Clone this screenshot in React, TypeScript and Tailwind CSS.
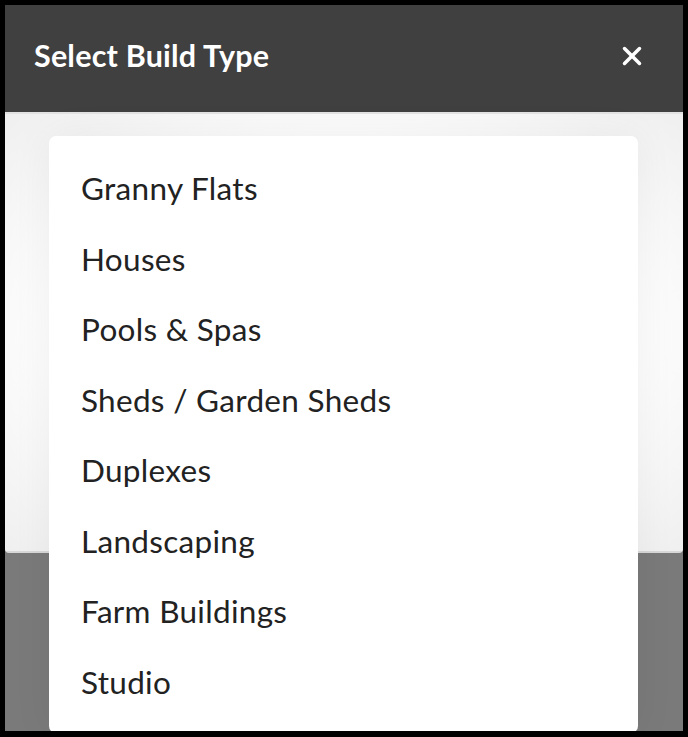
import { X } from "lucide-react";

const buildTypes = [
  "Granny Flats",
  "Houses",
  "Pools & Spas",
  "Sheds / Garden Sheds",
  "Duplexes",
  "Landscaping",
  "Farm Buildings",
  "Studio",
];

export default function App() {
  return (
    <div className="w-[688px] h-[737px] bg-black pt-[5px] pl-[5px] pr-[5px] pb-[6px] font-['Lato',sans-serif]">
      <div className="relative h-full bg-[#7a7a7a] overflow-hidden">
        <div className="flex flex-col rounded-b-[4px] overflow-hidden">
          <div className="h-[107px] bg-[#404040] flex items-center justify-between pl-[29px] pr-[36px] pb-[5px]">
            <h2 className="text-white text-[30.5px] font-bold tracking-[0.2px]">Select Build Type</h2>
            <X className="w-[30px] h-[30px] text-white" strokeWidth={2.8} />
          </div>
          <div className="h-[2px] bg-[#e2e2e2]" />
          <div className="h-[439px] bg-[radial-gradient(ellipse_at_center,#ffffff_55%,#efefef_100%)] border-b-2 border-[#d8d8d8]" />
        </div>

        <ul className="absolute left-[44px] top-[131px] w-[589px] h-[597px] bg-white rounded-[7px] shadow-[0_0_40px_rgba(0,0,0,0.06)] pt-[17.5px]">
          {buildTypes.map((type) => (
            <li
              key={type}
              className="h-[70.5px] flex items-center pl-[32px] text-[31.5px] text-[#222222] tracking-[0.3px]"
            >
              {type}
            </li>
          ))}
        </ul>
      </div>
    </div>
  );
}
